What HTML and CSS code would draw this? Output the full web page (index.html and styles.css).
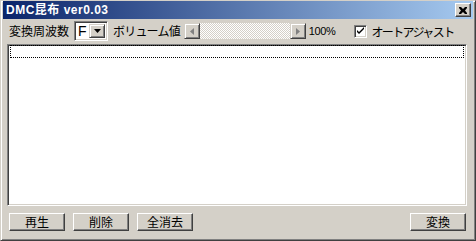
FILE: index.html
```html
<!DOCTYPE html>
<html lang="ja">
<head>
<meta charset="utf-8">
<title>DMC昆布 ver0.03</title>
<link rel="stylesheet" href="styles.css">
</head>
<body>
<div class="window">
  <div class="titlebar">
    <span class="title">DMC昆布 ver0.03</span>
    <button class="close" aria-label="閉じる">
      <svg width="8" height="7" viewBox="0 0 8 7"><path d="M0 0h2l2 2 2-2h2v1l-2 2.5 2 2.5v1h-2l-2-2-2 2h-2v-1l2-2.5-2-2.5z" fill="#000"/></svg>
    </button>
  </div>
  <div class="toolbar">
    <span class="label">変換周波数</span>
    <div class="combo">
      <span class="combo-value">F</span>
      <span class="combo-btn">
        <svg width="7" height="4" viewBox="0 0 7 4"><path d="M0 0h7L3.5 4z" fill="#000"/></svg>
      </span>
    </div>
    <span class="label vol">ボリューム値</span>
    <div class="scrollbar">
      <span class="sb-btn"><svg width="4" height="7" viewBox="0 0 4 7"><path d="M4 0v7L0 3.5z" fill="#808080"/></svg></span>
      <span class="sb-track"></span>
      <span class="sb-btn"><svg width="4" height="7" viewBox="0 0 4 7"><path d="M0 0v7L4 3.5z" fill="#808080"/></svg></span>
    </div>
    <span class="pct">100%</span>
    <label class="check">
      <span class="box"><svg width="9" height="9" viewBox="0 0 9 9"><path d="M1 3l2 2 5-5v2l-5 5-2-2z" fill="#000"/></svg></span>
      <span class="check-label">オートアジャスト</span>
    </label>
  </div>
  <div class="list">
    <div class="list-item"></div>
  </div>
  <div class="buttons">
    <button class="btn">再生</button>
    <button class="btn">削除</button>
    <button class="btn">全消去</button>
    <span class="spacer"></span>
    <button class="btn">変換</button>
  </div>
</div>
</body>
</html>
```
FILE: styles.css
```css
* { box-sizing: border-box; }
html, body {
  margin: 0;
  padding: 0;
  background: #d4d0c8;
}
body {
  font-family: "Noto Sans CJK JP", "DejaVu Sans", sans-serif;
  font-size: 12px;
  color: #000;
}
.window {
  width: 476px;
  height: 241px;
  display: flex;
  flex-direction: column;
  background: #d4d0c8;
  border-top: 1px solid #d4d0c8;
  border-left: 1px solid #d4d0c8;
  border-right: 1px solid #404040;
  border-bottom: 1px solid #404040;
  box-shadow: inset 1px 1px 0 #fff, inset -1px -1px 0 #808080;
  padding: 0 2px 2px 2px;
}
.titlebar {
  height: 18px;
  flex: none;
  display: flex;
  align-items: center;
  justify-content: space-between;
  background: linear-gradient(to right, #0a246a, #a6caf0);
  padding: 0 2px 0 3px;
}
.title {
  color: #fff;
  font-weight: bold;
  font-size: 12px;
  letter-spacing: 0.5px;
  line-height: 18px;
  font-family: "Liberation Sans", "Noto Sans CJK JP", sans-serif;
}
.close {
  width: 16px;
  height: 14px;
  padding: 0;
  margin: 0;
  background: #d4d0c8;
  border-top: 1px solid #fff;
  border-left: 1px solid #fff;
  border-right: 1px solid #404040;
  border-bottom: 1px solid #404040;
  box-shadow: inset -1px -1px 0 #808080;
  display: flex;
  align-items: center;
  justify-content: center;
}
.toolbar {
  height: 24px;
  flex: none;
  display: flex;
  align-items: center;
  padding-left: 6px;
}
.label {
  line-height: 16px;
  white-space: nowrap;
}
.combo {
  margin-left: 5px;
  width: 34px;
  height: 20px;
  display: flex;
  background: #fff;
  border-top: 1px solid #808080;
  border-left: 1px solid #808080;
  border-right: 1px solid #fff;
  border-bottom: 1px solid #fff;
  box-shadow: inset 1px 1px 0 #404040, inset -1px -1px 0 #d4d0c8;
  padding: 2px;
}
.combo-value {
  flex: 1;
  line-height: 15px;
  padding-left: 1px;
  font-family: "Liberation Sans", sans-serif;
  font-size: 14px;
}
.combo-btn {
  width: 16px;
  height: 14px;
  background: #d4d0c8;
  border-top: 1px solid #d4d0c8;
  border-left: 1px solid #d4d0c8;
  border-right: 1px solid #404040;
  border-bottom: 1px solid #404040;
  box-shadow: inset 1px 1px 0 #fff, inset -1px -1px 0 #808080;
  display: flex;
  align-items: center;
  justify-content: center;
}
.vol {
  margin-left: 5px;
  letter-spacing: -0.8px;
}
.scrollbar {
  margin-left: 4px;
  width: 122px;
  height: 16px;
  display: flex;
}
.sb-btn {
  width: 16px;
  height: 16px;
  background: #d4d0c8;
  border-top: 1px solid #d4d0c8;
  border-left: 1px solid #d4d0c8;
  border-right: 1px solid #404040;
  border-bottom: 1px solid #404040;
  box-shadow: inset 1px 1px 0 #fff, inset -1px -1px 0 #808080;
  display: flex;
  align-items: center;
  justify-content: center;
  flex: none;
}
.sb-track {
  flex: 1;
  background-color: #fff;
  background-image: conic-gradient(#d4d0c8 25%, #fff 0 50%, #d4d0c8 0 75%, #fff 0);
  background-size: 2px 2px;
}
.pct {
  margin-left: 3px;
  font-family: "Liberation Sans", sans-serif;
  font-size: 11px;
  letter-spacing: -0.4px;
}
.check {
  margin-left: 19px;
  display: flex;
  align-items: center;
}
.box {
  width: 13px;
  height: 13px;
  background: #fff;
  border-top: 1px solid #808080;
  border-left: 1px solid #808080;
  border-right: 1px solid #fff;
  border-bottom: 1px solid #fff;
  box-shadow: inset 1px 1px 0 #404040, inset -1px -1px 0 #d4d0c8;
  display: flex;
  align-items: center;
  justify-content: center;
}
.check-label {
  margin-left: 4px;
  letter-spacing: -1.6px;
}
.list {
  flex: 1;
  margin: 1px 6px 0 4px;
  background: #fff;
  border-top: 1px solid #808080;
  border-left: 1px solid #808080;
  border-right: 1px solid #fff;
  border-bottom: 1px solid #fff;
  box-shadow: inset 1px 1px 0 #404040, inset -1px -1px 0 #d4d0c8;
  padding: 0 2px 0 2px;
}
.list-item {
  height: 13px;
  border: 1px dotted #000;
}
.buttons {
  height: 32px;
  flex: none;
  display: flex;
  align-items: center;
  padding: 0 7px 0 6px;
  gap: 8px;
}
.spacer { flex: 1; }
.btn {
  width: 56px;
  height: 18px;
  padding: 0;
  margin: 0;
  font-family: "Noto Sans CJK JP", sans-serif;
  font-size: 12px;
  line-height: 14px;
  color: #000;
  background: #d4d0c8;
  border-top: 1px solid #fff;
  border-left: 1px solid #fff;
  border-right: 1px solid #404040;
  border-bottom: 1px solid #404040;
  box-shadow: inset -1px -1px 0 #808080;
}
```
